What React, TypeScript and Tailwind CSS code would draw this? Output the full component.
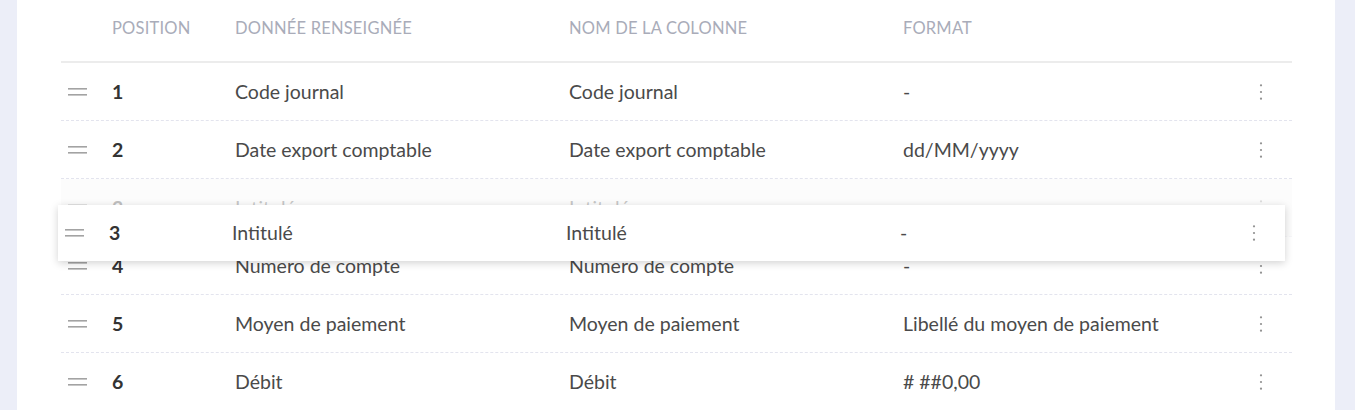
import React from "react";

interface Row {
  position: number;
  donnee: string;
  nom: string;
  format: string;
}

const rows: Row[] = [
  { position: 1, donnee: "Code journal", nom: "Code journal", format: "-" },
  { position: 2, donnee: "Date export comptable", nom: "Date export comptable", format: "dd/MM/yyyy" },
  { position: 3, donnee: "Intitulé", nom: "Intitulé", format: "-" },
  { position: 4, donnee: "Numero de compte", nom: "Numero de compte", format: "-" },
  { position: 5, donnee: "Moyen de paiement", nom: "Moyen de paiement", format: "Libellé du moyen de paiement" },
  { position: 6, donnee: "Débit", nom: "Débit", format: "# ##0,00" },
];

const cols = "grid grid-cols-[51px_123px_334px_334px_1fr_48px]";

const DragHandle = () => (
  <svg width="19" height="8" viewBox="0 0 19 8" className="block">
    <rect x="0" y="0" width="19" height="1.6" fill="#a3a3a3" />
    <rect x="0" y="6" width="19" height="1.6" fill="#a3a3a3" />
  </svg>
);

const Kebab = () => (
  <svg width="4" height="18" viewBox="0 0 4 18" className="block">
    <circle cx="2" cy="2.3" r="1.1" fill="#909090" />
    <circle cx="2" cy="9" r="1.1" fill="#909090" />
    <circle cx="2" cy="15.7" r="1.1" fill="#909090" />
  </svg>
);

const RowCells = ({ row }: { row: Row }) => (
  <>
    <div className="flex items-center pl-[7px]">
      <DragHandle />
    </div>
    <div className="flex items-center font-bold text-[#333333]">{row.position}</div>
    <div className="flex items-center whitespace-nowrap">{row.donnee}</div>
    <div className="flex items-center whitespace-nowrap">{row.nom}</div>
    <div className="flex items-center whitespace-nowrap">{row.format}</div>
    <div className="flex items-center pl-[15px]">
      <Kebab />
    </div>
  </>
);

export default function App() {
  return (
    <div
      className="flex h-[410px] w-full overflow-hidden bg-white"
      style={{ fontFamily: "Lato, 'Open Sans', sans-serif" }}
    >
      <div className="w-[17px] shrink-0 bg-[#eceef8]" />
      <div className="flex-1 pl-[44px] pr-[43px]">
        <div className="relative">
          {/* header */}
          <div className={`${cols} h-[63px] border-b-2 border-[#ececec] pt-[18px] text-[16.5px] uppercase leading-[20px] tracking-[0.2px] text-[#a9acb9]`}>
            <div />
            <div>Position</div>
            <div>Donnée renseignée</div>
            <div>Nom de la colonne</div>
            <div>Format</div>
            <div />
          </div>

          {rows.map((row) =>
            row.position === 3 ? (
              <div
                key={row.position}
                className={`${cols} h-[58px] border-b border-dashed border-[#e3e4ee] bg-[#f6f6f6] text-[19.5px] text-[#4a4a4a] opacity-30`}
              >
                <RowCells row={row} />
              </div>
            ) : (
              <div
                key={row.position}
                className={`${cols} h-[58px] border-b border-dashed border-[#e3e4ee] text-[19.5px] text-[#4a4a4a]`}
              >
                <RowCells row={row} />
              </div>
            )
          )}

          {/* dragged row */}
          <div
            className={`${cols} absolute left-[-3px] top-[205px] h-[56px] w-[1227px] bg-white text-[19.5px] text-[#4a4a4a] shadow-[0_2px_8px_rgba(0,0,0,0.18)]`}
          >
            <RowCells row={rows[2]} />
          </div>
        </div>
      </div>
      <div className="w-[20px] shrink-0 bg-[#eceef8]" />
    </div>
  );
}
